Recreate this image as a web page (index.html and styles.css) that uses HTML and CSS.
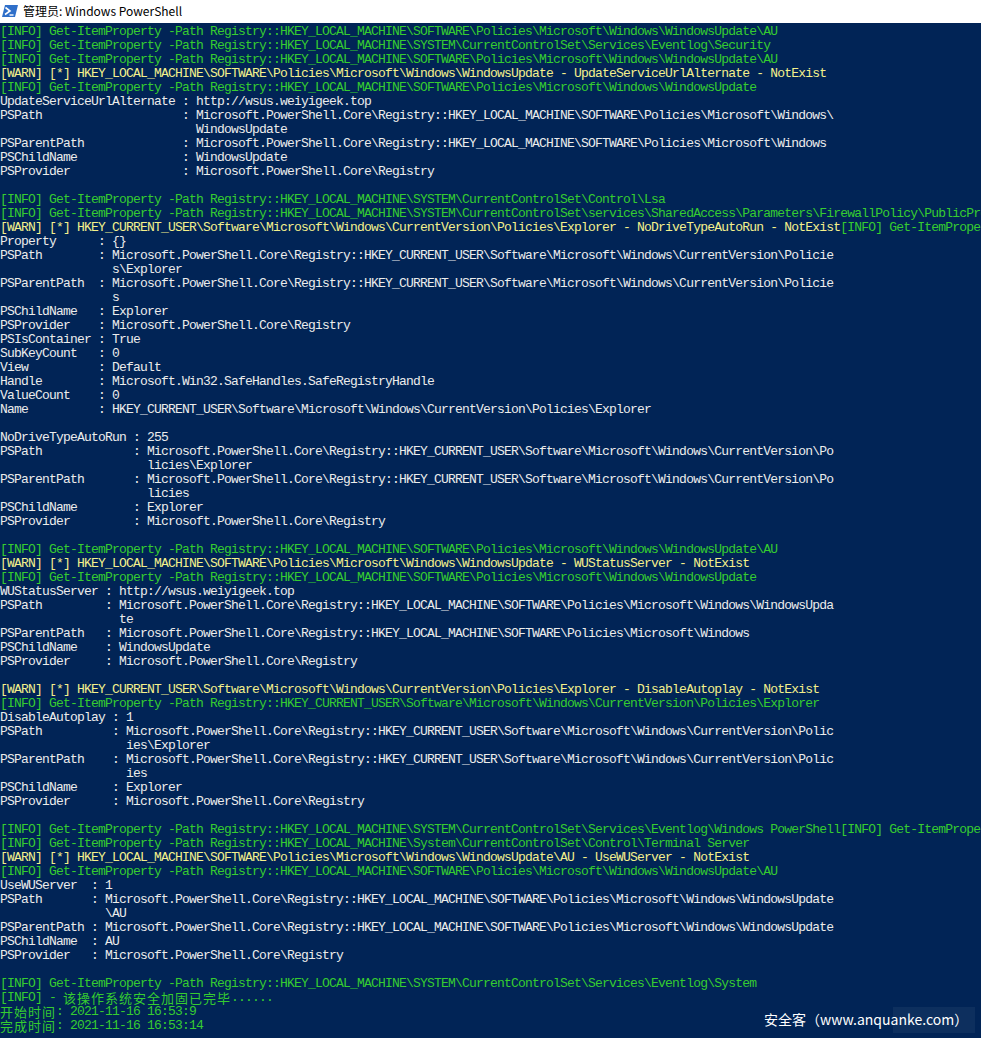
FILE: index.html
```html
<!DOCTYPE HTML>
<html>
<head>
<meta charset="utf-8" />
<title>管理员: Windows PowerShell</title>
<link rel="stylesheet" href="styles.css">
</head>

<body>
<div class="titlebar">
	<svg class="ps-icon" width="16" height="14" viewBox="0 0 16 14">
		<path d="M3 1 H16 L13 13 H0 Z" fill="#2f6fc9" />
		<path d="M3.5 3.5 L8 7 L3 10.5" fill="none" stroke="#fff" stroke-width="1.6" />
		<path d="M7.5 11 H11.5" stroke="#fff" stroke-width="1.4" />
	</svg>
	<span class="title">管理员: Windows PowerShell</span>
</div>

<div class="console">
<div class="ln g">[INFO] Get-ItemProperty -Path Registry::HKEY_LOCAL_MACHINE\SOFTWARE\Policies\Microsoft\Windows\WindowsUpdate\AU</div>
<div class="ln g">[INFO] Get-ItemProperty -Path Registry::HKEY_LOCAL_MACHINE\SYSTEM\CurrentControlSet\Services\Eventlog\Security</div>
<div class="ln g">[INFO] Get-ItemProperty -Path Registry::HKEY_LOCAL_MACHINE\SOFTWARE\Policies\Microsoft\Windows\WindowsUpdate\AU</div>
<div class="ln y">[WARN] [*] HKEY_LOCAL_MACHINE\SOFTWARE\Policies\Microsoft\Windows\WindowsUpdate - UpdateServiceUrlAlternate - NotExist</div>
<div class="ln g">[INFO] Get-ItemProperty -Path Registry::HKEY_LOCAL_MACHINE\SOFTWARE\Policies\Microsoft\Windows\WindowsUpdate</div>
<div class="ln">UpdateServiceUrlAlternate : http://wsus.weiyigeek.top</div>
<div class="ln">PSPath                    : Microsoft.PowerShell.Core\Registry::HKEY_LOCAL_MACHINE\SOFTWARE\Policies\Microsoft\Windows\</div>
<div class="ln">                            WindowsUpdate</div>
<div class="ln">PSParentPath              : Microsoft.PowerShell.Core\Registry::HKEY_LOCAL_MACHINE\SOFTWARE\Policies\Microsoft\Windows</div>
<div class="ln">PSChildName               : WindowsUpdate</div>
<div class="ln">PSProvider                : Microsoft.PowerShell.Core\Registry</div>
<div class="ln"></div>
<div class="ln g">[INFO] Get-ItemProperty -Path Registry::HKEY_LOCAL_MACHINE\SYSTEM\CurrentControlSet\Control\Lsa</div>
<div class="ln g">[INFO] Get-ItemProperty -Path Registry::HKEY_LOCAL_MACHINE\SYSTEM\CurrentControlSet\services\SharedAccess\Parameters\FirewallPolicy\PublicPro</div>
<div class="ln y">[WARN] [*] HKEY_CURRENT_USER\Software\Microsoft\Windows\CurrentVersion\Policies\Explorer - NoDriveTypeAutoRun - NotExist<span class="g">[INFO] Get-ItemProper</span></div>
<div class="ln">Property      : {}</div>
<div class="ln">PSPath        : Microsoft.PowerShell.Core\Registry::HKEY_CURRENT_USER\Software\Microsoft\Windows\CurrentVersion\Policie</div>
<div class="ln">                s\Explorer</div>
<div class="ln">PSParentPath  : Microsoft.PowerShell.Core\Registry::HKEY_CURRENT_USER\Software\Microsoft\Windows\CurrentVersion\Policie</div>
<div class="ln">                s</div>
<div class="ln">PSChildName   : Explorer</div>
<div class="ln">PSProvider    : Microsoft.PowerShell.Core\Registry</div>
<div class="ln">PSIsContainer : True</div>
<div class="ln">SubKeyCount   : 0</div>
<div class="ln">View          : Default</div>
<div class="ln">Handle        : Microsoft.Win32.SafeHandles.SafeRegistryHandle</div>
<div class="ln">ValueCount    : 0</div>
<div class="ln">Name          : HKEY_CURRENT_USER\Software\Microsoft\Windows\CurrentVersion\Policies\Explorer</div>
<div class="ln"></div>
<div class="ln">NoDriveTypeAutoRun : 255</div>
<div class="ln">PSPath             : Microsoft.PowerShell.Core\Registry::HKEY_CURRENT_USER\Software\Microsoft\Windows\CurrentVersion\Po</div>
<div class="ln">                     licies\Explorer</div>
<div class="ln">PSParentPath       : Microsoft.PowerShell.Core\Registry::HKEY_CURRENT_USER\Software\Microsoft\Windows\CurrentVersion\Po</div>
<div class="ln">                     licies</div>
<div class="ln">PSChildName        : Explorer</div>
<div class="ln">PSProvider         : Microsoft.PowerShell.Core\Registry</div>
<div class="ln"></div>
<div class="ln g">[INFO] Get-ItemProperty -Path Registry::HKEY_LOCAL_MACHINE\SOFTWARE\Policies\Microsoft\Windows\WindowsUpdate\AU</div>
<div class="ln y">[WARN] [*] HKEY_LOCAL_MACHINE\SOFTWARE\Policies\Microsoft\Windows\WindowsUpdate - WUStatusServer - NotExist</div>
<div class="ln g">[INFO] Get-ItemProperty -Path Registry::HKEY_LOCAL_MACHINE\SOFTWARE\Policies\Microsoft\Windows\WindowsUpdate</div>
<div class="ln">WUStatusServer : http://wsus.weiyigeek.top</div>
<div class="ln">PSPath         : Microsoft.PowerShell.Core\Registry::HKEY_LOCAL_MACHINE\SOFTWARE\Policies\Microsoft\Windows\WindowsUpda</div>
<div class="ln">                 te</div>
<div class="ln">PSParentPath   : Microsoft.PowerShell.Core\Registry::HKEY_LOCAL_MACHINE\SOFTWARE\Policies\Microsoft\Windows</div>
<div class="ln">PSChildName    : WindowsUpdate</div>
<div class="ln">PSProvider     : Microsoft.PowerShell.Core\Registry</div>
<div class="ln"></div>
<div class="ln y">[WARN] [*] HKEY_CURRENT_USER\Software\Microsoft\Windows\CurrentVersion\Policies\Explorer - DisableAutoplay - NotExist</div>
<div class="ln g">[INFO] Get-ItemProperty -Path Registry::HKEY_CURRENT_USER\Software\Microsoft\Windows\CurrentVersion\Policies\Explorer</div>
<div class="ln">DisableAutoplay : 1</div>
<div class="ln">PSPath          : Microsoft.PowerShell.Core\Registry::HKEY_CURRENT_USER\Software\Microsoft\Windows\CurrentVersion\Polic</div>
<div class="ln">                  ies\Explorer</div>
<div class="ln">PSParentPath    : Microsoft.PowerShell.Core\Registry::HKEY_CURRENT_USER\Software\Microsoft\Windows\CurrentVersion\Polic</div>
<div class="ln">                  ies</div>
<div class="ln">PSChildName     : Explorer</div>
<div class="ln">PSProvider      : Microsoft.PowerShell.Core\Registry</div>
<div class="ln"></div>
<div class="ln g">[INFO] Get-ItemProperty -Path Registry::HKEY_LOCAL_MACHINE\SYSTEM\CurrentControlSet\Services\Eventlog\Windows PowerShell[INFO] Get-ItemProper</div>
<div class="ln g">[INFO] Get-ItemProperty -Path Registry::HKEY_LOCAL_MACHINE\System\CurrentControlSet\Control\Terminal Server</div>
<div class="ln y">[WARN] [*] HKEY_LOCAL_MACHINE\SOFTWARE\Policies\Microsoft\Windows\WindowsUpdate\AU - UseWUServer - NotExist</div>
<div class="ln g">[INFO] Get-ItemProperty -Path Registry::HKEY_LOCAL_MACHINE\SOFTWARE\Policies\Microsoft\Windows\WindowsUpdate\AU</div>
<div class="ln">UseWUServer  : 1</div>
<div class="ln">PSPath       : Microsoft.PowerShell.Core\Registry::HKEY_LOCAL_MACHINE\SOFTWARE\Policies\Microsoft\Windows\WindowsUpdate</div>
<div class="ln">               \AU</div>
<div class="ln">PSParentPath : Microsoft.PowerShell.Core\Registry::HKEY_LOCAL_MACHINE\SOFTWARE\Policies\Microsoft\Windows\WindowsUpdate</div>
<div class="ln">PSChildName  : AU</div>
<div class="ln">PSProvider   : Microsoft.PowerShell.Core\Registry</div>
<div class="ln"></div>
<div class="ln g">[INFO] Get-ItemProperty -Path Registry::HKEY_LOCAL_MACHINE\SYSTEM\CurrentControlSet\Services\Eventlog\System</div>
<div class="ln g">[INFO] - <span class="cjk">该操作系统安全加固已完毕</span>......</div>
<div class="ln g"><span class="cjk">开始时间</span>: 2021-11-16 16:53:9</div>
<div class="ln g"><span class="cjk">完成时间</span>: 2021-11-16 16:53:14</div>
</div>

<div class="watermark">安全客（www.anquanke.com）</div>
<div class="wm-box"></div>
</body>
</html>
```

FILE: styles.css
```css
html, body { height: 100%; }
body {
	margin: 0;
	background: #012456;
	overflow: hidden;
	position: relative;
}

.titlebar {
	height: 23px;
	background: #fff;
	display: flex;
	align-items: center;
	gap: 5px;
	padding-left: 2px;
}
	.titlebar .ps-icon { flex: none; margin-top: -1px; }
	.titlebar .title {
		font-family: "Noto Sans CJK SC", "Noto Sans", sans-serif;
		font-size: 12px;
		color: #000;
		margin-top: -2px;
	}

.console {
	padding-top: 2px;
	font-family: "Liberation Mono", "DejaVu Sans Mono", monospace;
	font-size: 13px;
	letter-spacing: -0.8px;
	color: #ececec;
}
	.console .ln { height: 14px; line-height: 14px; white-space: pre; }
	.console .g { color: #36cc30; }
	.console .y { color: #f4f08c; }
	.console .cjk {
		font-family: "Noto Sans CJK SC", sans-serif;
		font-size: 13px;
		line-height: 14px;
		letter-spacing: 1px;
		display: inline-block;
		vertical-align: top;
	}

.watermark {
	position: absolute;
	left: 764px;
	top: 1009px;
	font-family: "Noto Sans CJK SC", "Noto Sans", sans-serif;
	font-size: 14px;
	color: #fff;
	z-index: 2;
}
.wm-box {
	position: absolute;
	left: 893px;
	top: 1007px;
	width: 82px;
	height: 26px;
	background: rgba(255, 255, 255, 0.05);
}
```
